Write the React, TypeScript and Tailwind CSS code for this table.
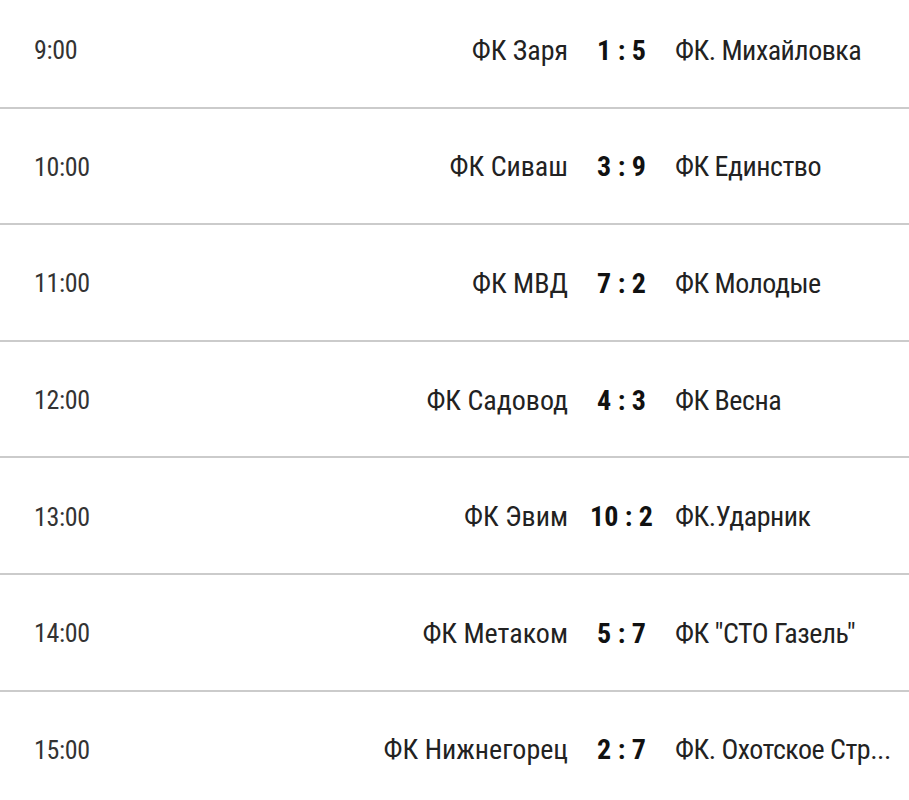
import React from "react";

const matches = [
  { time: "9:00", home: "ФК Заря", score: "1 : 5", away: "ФК. Михайловка" },
  { time: "10:00", home: "ФК Сиваш", score: "3 : 9", away: "ФК Единство" },
  { time: "11:00", home: "ФК МВД", score: "7 : 2", away: "ФК Молодые" },
  { time: "12:00", home: "ФК Садовод", score: "4 : 3", away: "ФК Весна" },
  { time: "13:00", home: "ФК Эвим", score: "10 : 2", away: "ФК.Ударник" },
  { time: "14:00", home: "ФК Метаком", score: "5 : 7", away: 'ФК "СТО Газель"' },
  { time: "15:00", home: "ФК Нижнегорец", score: "2 : 7", away: "ФК. Охотское Стр..." },
];

export default function App() {
  return (
    <div className="w-[909px] h-[800px] overflow-hidden bg-white">
      <div className="-mt-[8px] flex flex-col">
        {matches.map((m) => (
          <div
            key={m.time}
            className="flex h-[116.6px] items-center border-b-2 border-[#cbcbcb] pl-[34px] pr-[8px] pt-[3px]"
          >
            <div className="w-[160px] shrink-0 font-['Roboto_Condensed','Open_Sans',sans-serif] text-[26px] font-normal tracking-[-0.3px] text-[#333]">
              {m.time}
            </div>
            <div className="min-w-0 flex-1 whitespace-nowrap text-right font-['Roboto_Condensed','Open_Sans',sans-serif] text-[28px] font-normal text-[#222]">
              {m.home}
            </div>
            <div className="w-[107px] shrink-0 text-center font-['Roboto_Condensed','Open_Sans',sans-serif] text-[28px] font-bold text-[#111]">
              {m.score}
            </div>
            <div className="w-[226px] shrink-0 overflow-hidden whitespace-nowrap font-['Roboto_Condensed','Open_Sans',sans-serif] text-[28px] font-normal tracking-[-0.5px] text-[#222]">
              {m.away}
            </div>
          </div>
        ))}
      </div>
    </div>
  );
}
